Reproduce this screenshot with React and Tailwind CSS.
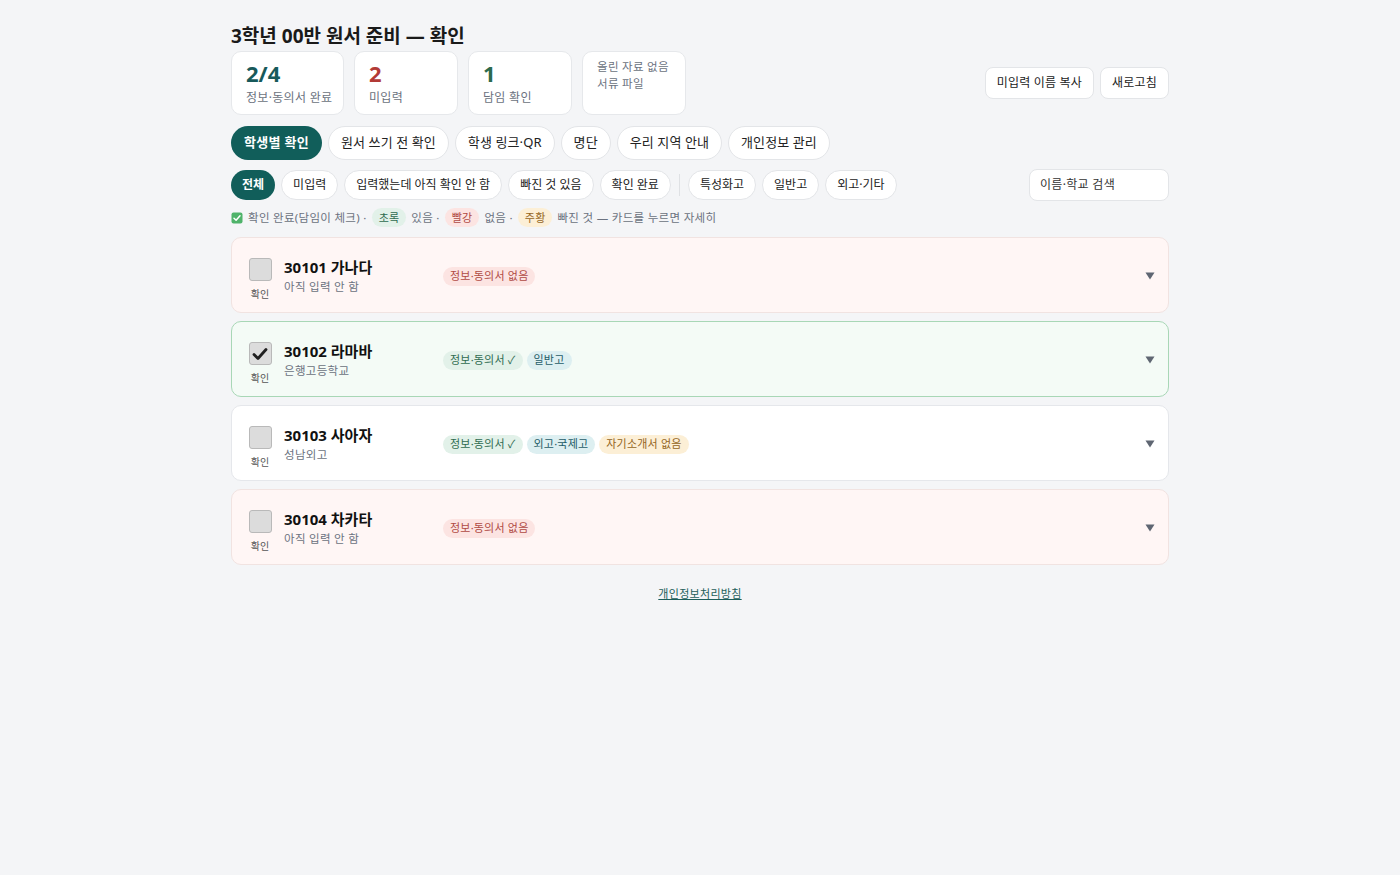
import React from "react";

const font = { fontFamily: '"Noto Sans", "Noto Sans CJK KR", sans-serif' };

function Stat({ value, label, color, w }) {
  return (
    <div className={`h-[64px] ${w} rounded-[10px] bg-white border border-[#e6e8eb] px-[14px] pt-[7px]`}>
      <div className={`text-[22px] leading-[28px] font-bold ${color}`}>{value}</div>
      <div className="text-[12px] leading-[16px] mt-[3px] text-[#6b7280] whitespace-nowrap tracking-[0.3px]">{label}</div>
    </div>
  );
}

function Tag({ kind, children }) {
  const styles = {
    red: "bg-[#fce4e2] text-[#b04a44]",
    green: "bg-[#e2f1e9] text-[#2f6b50]",
    blue: "bg-[#ddeff1] text-[#1f5c68]",
    orange: "bg-[#fcefd6] text-[#94651c]",
  };
  return (
    <span className={`inline-flex items-center h-[19px] px-[7px] rounded-full text-[11px] tracking-[0.2px] ${styles[kind]}`}>
      {children}
    </span>
  );
}

function Card({ id, name, sub, tags, variant, checked }) {
  const v = {
    red: "bg-[#fff6f5] border-[#f1e3e1]",
    green: "bg-[#f4fbf6] border-[#a8d7b6]",
    white: "bg-white border-[#e5e7eb]",
  }[variant];
  return (
    <div className={`h-[76px] rounded-[10px] border ${v} flex items-center pl-[16px] pr-[13px]`}>
      <div className="flex flex-col items-center w-[24px] mt-[8px]">
        <div className="w-[23px] h-[23px] rounded-[3px] bg-[#dcdcdc] border border-[#b9b9b9] flex items-center justify-center">
          {checked && (
            <svg width="16" height="14" viewBox="0 0 16 14">
              <path d="M2 7.5 L6 11.5 L14 2.5" fill="none" stroke="#1f1f1f" strokeWidth="2.8" strokeLinecap="round" strokeLinejoin="round" />
            </svg>
          )}
        </div>
        <div className="text-[10px] leading-[12px] text-[#555] mt-[7px]">확인</div>
      </div>
      <div className="ml-[12px] w-[159px] mt-[2px]">
        <div className="text-[15px] leading-[20px] font-bold text-[#111]">{id} {name}</div>
        <div className="text-[11.5px] leading-[16px] mt-[2px] text-[#6b7280] tracking-[0.3px]">{sub}</div>
      </div>
      <div className="flex items-center gap-[4px] flex-1 mt-[3px]">
        {tags.map((t, i) => (
          <Tag key={i} kind={t[0]}>{t[1]}</Tag>
        ))}
      </div>
      <svg width="10" height="8" viewBox="0 0 10 8" className="mt-[2px]">
        <path d="M0.5 0.5 L9.5 0.5 L5 7.5 Z" fill="#5f6672" />
      </svg>
    </div>
  );
}

export default function App() {
  const tabs = ["원서 쓰기 전 확인", "학생 링크·QR", "명단", "우리 지역 안내", "개인정보 관리"];
  const chips1 = ["미입력", "입력했는데 아직 확인 안 함", "빠진 것 있음", "확인 완료"];
  const chips2 = ["특성화고", "일반고", "외고·기타"];
  return (
    <div className="min-h-[875px] bg-[#f4f5f7] text-[#222]" style={font}>
      <div className="w-[938px] mx-auto pt-[23px]">
        <h1 className="text-[19px] leading-[26px] font-bold text-[#1a1a1a] mb-[2px]">3학년 00반 원서 준비 — 확인</h1>
        <div className="flex items-center">
          <div className="flex gap-[10px]">
            <Stat value="2/4" label="정보·동의서 완료" color="text-[#17595a]" w="w-[113px]" />
            <Stat value="2" label="미입력" color="text-[#b23a36]" w="w-[104px]" />
            <Stat value="1" label="담임 확인" color="text-[#2c6a4c]" w="w-[104px]" />
            <div className="h-[64px] w-[104px] rounded-[10px] bg-white border border-[#e6e8eb] px-[14px] pt-[6px] text-[11.5px] leading-[17px] text-[#6b7280] tracking-[0.3px]">
              <div>올린 자료 없음</div>
              <div>서류 파일</div>
            </div>
          </div>
          <div className="ml-auto flex gap-[6px]">
            <button className="h-[32px] px-[11px] rounded-[8px] bg-white border border-[#e3e5e8] text-[12px] tracking-[0.2px] text-[#222]">미입력 이름 복사</button>
            <button className="h-[32px] px-[11px] rounded-[8px] bg-white border border-[#e3e5e8] text-[12px] tracking-[0.2px] text-[#222]">새로고침</button>
          </div>
        </div>

        <div className="flex gap-[6px] mt-[11px]">
          <button className="h-[34px] px-[13px] rounded-full bg-[#115e5a] text-white text-[13px] font-bold tracking-[0.3px]">학생별 확인</button>
          {tabs.map((t) => (
            <button key={t} className="h-[34px] px-[12px] rounded-full bg-white border border-[#e3e5e8] text-[13px] tracking-[0.1px] text-[#222]">{t}</button>
          ))}
        </div>

        <div className="flex items-center gap-[6px] mt-[9px]">
          <button className="h-[30px] px-[11px] rounded-full bg-[#115e5a] text-white text-[12px] font-bold">전체</button>
          {chips1.map((t) => (
            <button key={t} className="h-[30px] px-[11px] rounded-full bg-white border border-[#e3e5e8] text-[12px] text-[#222]">{t}</button>
          ))}
          <div className="w-px h-[22px] bg-[#dfe1e4] mx-[2px]" />
          {chips2.map((t) => (
            <button key={t} className="h-[30px] px-[11px] rounded-full bg-white border border-[#e3e5e8] text-[12px] text-[#222]">{t}</button>
          ))}
          <div className="ml-auto h-[32px] w-[140px] rounded-[8px] bg-white border border-[#e3e5e8] flex items-center px-[10px] text-[12px] tracking-[0.3px] text-[#333]">이름·학교 검색</div>
        </div>

        <div className="flex items-center gap-[5px] mt-[7px] text-[11.5px] leading-[16px] text-[#6b7280] tracking-[0.3px]">
          <svg width="12" height="12" viewBox="0 0 12 12">
            <rect x="0.5" y="0.5" width="11" height="11" rx="2" fill="#4fb36a" />
            <path d="M3 6.2 L5.1 8.2 L9 3.8" fill="none" stroke="white" strokeWidth="1.5" strokeLinecap="round" strokeLinejoin="round" />
          </svg>
          <span>확인 완료(담임이 체크) ·</span>
          <Tag kind="green">초록</Tag>
          <span>있음 ·</span>
          <Tag kind="red">빨강</Tag>
          <span>없음 ·</span>
          <Tag kind="orange">주황</Tag>
          <span>빠진 것 — 카드를 누르면 자세히</span>
        </div>

        <div className="flex flex-col gap-[8px] mt-[10px]">
          <Card id="30101" name="가나다" sub="아직 입력 안 함" variant="red" tags={[["red", "정보·동의서 없음"]]} />
          <Card id="30102" name="라마바" sub="은행고등학교" variant="green" checked tags={[["green", "정보·동의서 ✓"], ["blue", "일반고"]]} />
          <Card id="30103" name="사아자" sub="성남외고" variant="white" tags={[["green", "정보·동의서 ✓"], ["blue", "외고·국제고"], ["orange", "자기소개서 없음"]]} />
          <Card id="30104" name="차카타" sub="아직 입력 안 함" variant="red" tags={[["red", "정보·동의서 없음"]]} />
        </div>

        <div className="text-center mt-[15px]">
          <a className="text-[11px] text-[#1d5e5a] underline tracking-[0.3px]">개인정보처리방침</a>
        </div>
      </div>
    </div>
  );
}
